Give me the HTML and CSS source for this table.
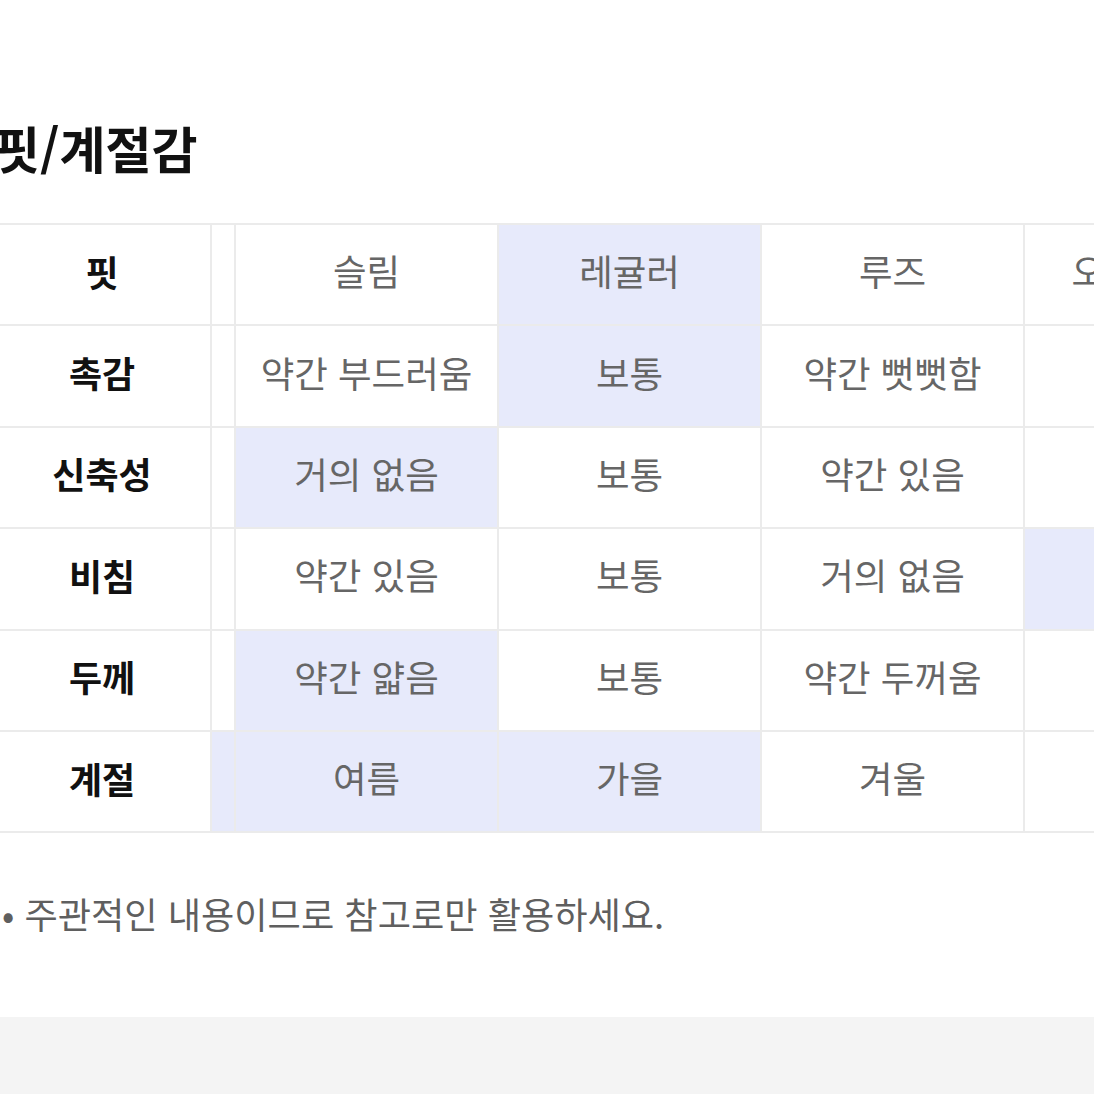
FILE: index.html
```html
<!DOCTYPE html>
<html lang="ko">
<head>
<meta charset="utf-8">
<title>핏/계절감</title>
<link rel="stylesheet" href="styles.css">
</head>
<body>
<div class="page">
  <h2 class="title">핏/계절감</h2>
  <div class="grid">
    <div class="cell label">핏</div><div class="cell sliver"></div>
    <div class="cell">슬림</div><div class="cell on">레귤러</div><div class="cell">루즈</div><div class="cell">오버사이즈</div>

    <div class="cell label">촉감</div><div class="cell sliver"></div>
    <div class="cell">약간 부드러움</div><div class="cell on">보통</div><div class="cell">약간 뻣뻣함</div><div class="cell">뻣뻣함</div>

    <div class="cell label">신축성</div><div class="cell sliver"></div>
    <div class="cell on">거의 없음</div><div class="cell">보통</div><div class="cell">약간 있음</div><div class="cell">좋음</div>

    <div class="cell label">비침</div><div class="cell sliver"></div>
    <div class="cell">약간 있음</div><div class="cell">보통</div><div class="cell">거의 없음</div><div class="cell on">없음</div>

    <div class="cell label">두께</div><div class="cell sliver"></div>
    <div class="cell on">약간 얇음</div><div class="cell">보통</div><div class="cell">약간 두꺼움</div><div class="cell">두꺼움</div>

    <div class="cell label">계절</div><div class="cell sliver on"></div>
    <div class="cell on">여름</div><div class="cell on">가을</div><div class="cell">겨울</div><div class="cell">봄</div>
  </div>
  <p class="note">• 주관적인 내용이므로 참고로만 활용하세요.</p>
  <div class="band"></div>
</div>
</body>
</html>
```

FILE: styles.css
```css
html, body {
  margin: 0;
  padding: 0;
  background: #ffffff;
  overflow: hidden;
}

.page {
  margin-left: -6px;
  font-family: "Noto Sans CJK KR", "Noto Sans", sans-serif;
  color: #111111;
}

.title {
  margin: 122px 0 51px 0;
  font-size: 50px;
  line-height: 50px;
  font-weight: 700;
  color: #111111;
  white-space: nowrap;
}

.grid {
  display: grid;
  grid-template-columns: 216px 22px repeat(4, 261px);
  grid-auto-rows: 99.4px;
  gap: 2px;
  padding: 2px 0;
  width: max-content;
  background: #ebebeb;
}

.cell {
  display: flex;
  align-items: center;
  justify-content: center;
  padding-bottom: 8px;
  box-sizing: border-box;
  background: #ffffff;
  font-size: 36.5px;
  color: #666666;
  white-space: nowrap;
}

.cell.on {
  background: #e7eafb;
}

.label {
  font-size: 36px;
  font-weight: 700;
  color: #111111;
}

.note {
  margin: 55px 0 78px 8px;
  font-size: 36.2px;
  line-height: 51px;
  color: #5f5f5f;
  white-space: nowrap;
}

.band {
  height: 120px;
  background: #f4f4f4;
}
```
